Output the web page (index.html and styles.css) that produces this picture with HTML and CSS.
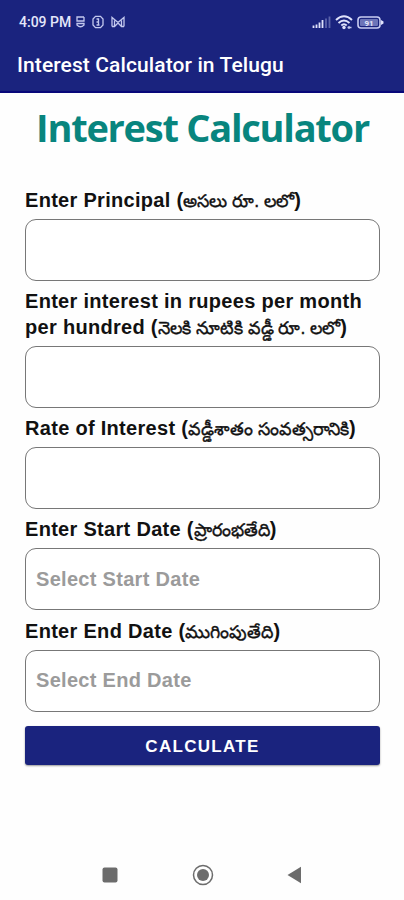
FILE: index.html
```html
<!DOCTYPE html>
<html lang="en">
<head>
  <meta charset="UTF-8" />
  <meta name="viewport" content="width=device-width, initial-scale=1.0"/>
  <title>Interest Calculator in Telugu</title>
  <link rel="stylesheet" href="styles.css">
</head>
<body>
  <header class="app-header">
    <div class="status-bar">
      <span class="status-time">4:09 PM</span>
      <div class="status-notifs">
        <svg width="9" height="12" viewBox="0 0 9 12">
          <path d="M8 1H1v4h7V1M1 7.500h7V9q-3.500 3.500-7 0z"/>
        </svg>
        <svg width="12" height="14" viewBox="0 0 12 14">
          <path d="M3.500 1.300h5L11 4v6l-2.500 2.700h-5L1 10V4z"/>
          <path d="M4.500 4h2v6M4.500 10h3M6.500 7h-2"/>
        </svg>
        <svg width="14" height="12" viewBox="0 0 14 12">
          <path d="M1 10.500v-9l6 5 6-5v9M3.500 10V4.500M10.500 10V4.500M1 10.500h2.500L7 7l3.500 3.500H13"/>
        </svg>
      </div>
      <div class="status-system">
        <svg width="19" height="13" viewBox="0 0 19 13">
          <path class="bar" d="M1.500 12v-2.500M4.500 12V8.500M7.500 12V6.500M10.500 12V4"/>
          <path class="bar dim" d="M14 12V2.500M17.500 12V.5"/>
        </svg>
        <svg width="18" height="15" viewBox="0 0 18 15">
          <path class="wave" d="M1 5q8-7.500 16 0M3.500 8q5.500-5 11 0M6.300 10.500q2.700-2.500 5.400 0"/>
          <circle class="fill" cx="9" cy="12.500" r="1.700"/>
          <path d="M14 11v3M12.500 12.500h4"/>
        </svg>
        <svg width="27" height="13" viewBox="0 0 27 13">
          <rect class="case" x="1" y="1" width="22" height="11" rx="3"/>
          <rect class="level" x="3" y="3" width="18" height="7" rx="1"/>
          <path class="fill" d="M24 4l2.500 1.500v2L24 9z"/>
          <text x="12" y="9.500" text-anchor="middle">91</text>
        </svg>
      </div>
    </div>
    <div class="app-title">Interest Calculator in Telugu</div>
  </header>

  <main class="calculator">
    <h1 class="calc-title">Interest Calculator</h1>

    <form class="calc-form">
      <label class="calc-label" for="principal">Enter Principal (<span class="te" lang="te">అసలు రూ. లలో</span>)</label>
      <input type="text" id="principal" class="calc-input">

      <label class="calc-label" for="rupees">Enter interest in rupees per month<br>per hundred (<span class="te" lang="te">నెలకి నూటికి వడ్డీ రూ. లలో</span>)</label>
      <input type="text" id="rupees" class="calc-input">

      <label class="calc-label" for="rate">Rate of Interest (<span class="te" lang="te">వడ్డీశాతం సంవత్సరానికి</span>)</label>
      <input type="text" id="rate" class="calc-input">

      <label class="calc-label" for="start">Enter Start Date (<span class="te" lang="te">ప్రారంభతేది</span>)</label>
      <input type="text" id="start" class="calc-input" placeholder="Select Start Date">

      <label class="calc-label" for="end">Enter End Date (<span class="te" lang="te">ముగింపుతేది</span>)</label>
      <input type="text" id="end" class="calc-input" placeholder="Select End Date">

      <button type="button" class="calc-button">CALCULATE</button>
    </form>
  </main>

  <nav class="nav-bar">
    <svg width="16" height="16" viewBox="0 0 16 16"><rect x=".5" y=".5" width="15" height="15" rx="2"/></svg>
    <svg width="22" height="22" viewBox="0 0 22 22">
      <circle class="ring" cx="11" cy="11" r="9.500"/>
      <circle cx="11" cy="11" r="6"/>
    </svg>
    <svg width="15" height="18" viewBox="0 0 15 18"><path d="M.5 9L14 .8v16.400z"/></svg>
  </nav>
</body>
</html>
```
FILE: styles.css
```css
* {
  box-sizing: border-box;
}
body {
  display: flex;
  flex-direction: column;
  height: 900px;
  margin: 0;
  background: #fefefe;
  color: #111;
  font-family: "Liberation Sans", Arial, sans-serif;
}

/* Header */
.app-header {
  height: 93px;
  background: #1a237e;
  border-bottom: 2px solid #08087a;
  color: #fff;
  font-family: Roboto, sans-serif;
}
.status-bar {
  display: flex;
  align-items: center;
  height: 44px;
  padding: 0 20px 0 19px;
}
.status-time {
  width: 57px;
  font-size: 14px;
  font-weight: 500;
  color: #e4e6fa;
  white-space: nowrap;
}
.status-notifs {
  display: flex;
  align-items: center;
  gap: 7px;
}
.status-system {
  display: flex;
  align-items: center;
  gap: 4px;
  margin-left: auto;
}
.status-bar svg {
  fill: none;
  stroke: #c3c8ee;
  stroke-width: 1.3;
}
.status-bar .bar {
  stroke: #dfe2fb;
  stroke-width: 1.8;
}
.status-bar .dim {
  stroke: #5c64ab;
}
.status-bar .wave {
  stroke: #dfe2fb;
  stroke-width: 1.9;
}
.status-bar .fill {
  fill: #dfe2fb;
  stroke: none;
}
.status-bar .case {
  stroke: #c9cdf2;
  stroke-width: 1.6;
}
.status-bar .level {
  fill: #6c74b8;
  stroke: none;
}
.status-bar text {
  fill: #e4e6fa;
  stroke: none;
  font-size: 8px;
  font-weight: 700;
}
.app-title {
  padding: 9px 0 0 17px;
  font-size: 21px;
  font-weight: 500;
  line-height: 25px;
  letter-spacing: 0.1px;
  white-space: nowrap;
}

/* Form */
.calculator {
  flex: 1;
  padding: 8px 24px 0 25px;
}
.calc-title {
  height: 85.600px;
  margin: 0;
  color: #08857e;
  font-family: "Open Sans", sans-serif;
  font-size: 38px;
  font-weight: 700;
  line-height: 52px;
  letter-spacing: -1.250px;
  text-align: center;
  white-space: nowrap;
}
.calc-form {
  display: flex;
  flex-direction: column;
}
.calc-label {
  padding: 0 0 6px;
  font-size: 20px;
  font-weight: 700;
  line-height: 26px;
  letter-spacing: 0.3px;
  white-space: nowrap;
}
.te {
  font-size: 17.600px;
  font-weight: 500;
  letter-spacing: 0;
  line-height: 1;
  -webkit-text-stroke: 0.4px #111;
}
.calc-input {
  height: 62px;
  margin-bottom: 7.300px;
  padding: 0 10px;
  border: 1px solid #777;
  border-radius: 11px;
  background: #fff;
  font: 700 20px "Liberation Sans", Arial, sans-serif;
  letter-spacing: 0.3px;
}
.calc-input::placeholder {
  color: #9b9b9b;
  opacity: 1;
}
.calc-button {
  height: 39px;
  margin-top: 7px;
  padding-top: 3px;
  border: none;
  border-radius: 3px;
  background: #1a237e;
  box-shadow: 0 1px 2px rgba(0,0,0,0.4);
  color: #fff;
  font: 700 17px "Liberation Sans", Arial, sans-serif;
  letter-spacing: 1.3px;
}

/* Navigation bar */
.nav-bar {
  display: flex;
  align-items: center;
  justify-content: space-between;
  height: 50px;
  padding: 0 102px;
}
.nav-bar svg {
  fill: #6c6c6c;
}
.nav-bar .ring {
  fill: none;
  stroke: #6c6c6c;
  stroke-width: 1.500;
}
```
